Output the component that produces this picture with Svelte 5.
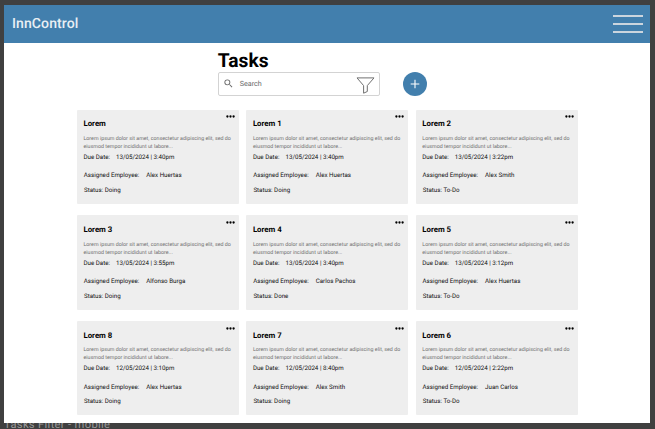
<script>
  const tasks = [
    ['Lorem', '13/05/2024 | 3:40pm', 'Alex Huertas', 'Doing'],
    ['Lorem 1', '13/05/2024 | 3:40pm', 'Alex Huertas', 'Doing'],
    ['Lorem 2', '13/05/2024 | 3:22pm', 'Alex Smith', 'To-Do'],
    ['Lorem 3', '13/05/2024 | 3:55pm', 'Alfonso Burga', 'Doing'],
    ['Lorem 4', '13/05/2024 | 3:40pm', 'Carlos Pachos', 'Done'],
    ['Lorem 5', '13/05/2024 | 3:12pm', 'Alex Huertas', 'To-Do'],
    ['Lorem 8', '12/05/2024 | 3:10pm', 'Alex Huertas', 'Doing'],
    ['Lorem 7', '12/05/2024 | 8:40pm', 'Alex Smith', 'Doing'],
    ['Lorem 6', '12/05/2024 | 2:22pm', 'Juan Carlos', 'To-Do']
  ].map(([title, due, employee, status]) => ({ title, due, employee, status }));
</script>

<div class="canvas">
  <main class="frame">
    <header>
      <span class="brand">InnControl</span>
      <button class="menu" aria-label="Menu"><i></i><i></i><i></i></button>
    </header>

    <section class="top">
      <h1>Tasks</h1>
      <div class="tools">
        <div class="search">
          <svg class="lens" viewBox="0 0 24 24"><path d="M15.5 14h-.79l-.28-.27A6.47 6.47 0 0 0 16 9.5 6.5 6.5 0 1 0 9.5 16c1.61 0 3.09-.59 4.23-1.57l.27.28v.79l5 4.99L20.49 19l-4.99-5zm-6 0C7.01 14 5 11.99 5 9.5S7.01 5 9.5 5 14 7.01 14 9.5 11.99 14 9.5 14z" /></svg>
          <span>Search</span>
          <svg class="funnel" viewBox="0 0 19 17"><path d="M1 .9H18L11.3 8.6V14.5L7.6 16.2V8.6Z" /></svg>
        </div>
        <button class="add" aria-label="Add task">
          <svg viewBox="0 0 24 24"><path d="M12 7.7v8.6M7.7 12h8.6" /></svg>
        </button>
      </div>
    </section>

    <section class="grid">
      {#each tasks as task}
        <article>
          <svg class="dots" viewBox="0 0 9 3"><circle cx="1.4" cy="1.5" r="1.15" /><circle cx="4.5" cy="1.5" r="1.15" /><circle cx="7.6" cy="1.5" r="1.15" /></svg>
          <h2>{task.title}</h2>
          <p class="desc">Lorem ipsum dolor sit amet, consectetur adipiscing elit, sed do<br />eiusmod tempor incididunt ut labore...</p>
          <p class="row due"><span>Due Date:</span><span>{task.due}</span></p>
          <p class="row who"><span>Assigned Employee:</span><span>{task.employee}</span></p>
          <p class="row status">Status: {task.status}</p>
        </article>
      {/each}
    </section>
  </main>
  <div class="label">Tasks Filter - mobile</div>
</div>

<style>
  :global(body) { background: #404040; overflow: hidden; }
  .canvas {
    box-sizing: border-box;
    width: 655px;
    height: 429px;
    padding: 5px 4px 0 4px;
    overflow: hidden;
    background: #404040;
    font-family: Roboto, sans-serif;
    text-rendering: geometricPrecision;
    color: #000;
  }
  .frame {
    position: relative;
    z-index: 1;
    box-sizing: border-box;
    width: 646px;
    height: 418px;
    padding-left: 0.5px;
    background: #fff;
  }
  button { border: 0; padding: 0; background: none; }
  h1, h2, p { margin: 0; white-space: nowrap; }
  header {
    display: flex;
    justify-content: space-between;
    box-sizing: border-box;
    height: 38px;
    margin-left: -0.5px;
    padding: 0 7.5px 0 8px;
    background: #427fad;
  }
  .brand {
    line-height: 39px;
    font-size: 14px;
    font-weight: 500;
    letter-spacing: 0.1px;
    color: #e9eff4;
  }
  .menu {
    display: flex;
    flex-direction: column;
    gap: 6.4px;
    width: 30px;
    padding-top: 10.2px;
  }
  .menu i { height: 1.6px; background: #cbd5de; }
  .top { padding: 6px 0 0 213.3px; }
  h1 { font-size: 19.2px; line-height: 23px; font-weight: 700; }
  .tools { display: flex; align-items: center; gap: 23px; height: 24px; }
  .search {
    display: flex;
    align-items: center;
    box-sizing: border-box;
    width: 162.5px;
    height: 24px;
    padding: 0 4px 0 4.5px;
    border: 1px solid #d3d3d3;
    border-radius: 2px;
    font-size: 7.2px;
    color: #666;
  }
  .search span { margin: -1px auto 0 5.4px; }
  .lens { width: 11px; height: 11px; margin-top: -2px; fill: #666; }
  .funnel { width: 19px; height: 17px; margin-top: 3px; fill: none; stroke: #707070; stroke-width: 1; }
  .add { width: 24px; height: 24px; border-radius: 50%; background: #427fad; }
  .add svg { display: block; fill: none; stroke: #fff; stroke-width: 1.1; }
  .grid {
    display: grid;
    grid-template-columns: repeat(3, 162px);
    grid-auto-rows: 94.4px;
    gap: 11.4px 7.4px;
    padding: 13.5px 0 0 72.5px;
  }
  article {
    position: relative;
    box-sizing: border-box;
    padding: 8.6px 0 0 6.5px;
    border-radius: 1px;
    background: #eee;
  }
  .dots { position: absolute; top: 5.5px; right: 4px; width: 9px; height: 3px; }
  h2 { font-size: 7.8px; line-height: 11px; font-weight: 700; }
  .desc {
    margin-top: 5.8px;
    font-size: 5.3px;
    line-height: 8px;
    color: #707070;
  }
  .row { display: flex; font-size: 6.2px; line-height: 8px; color: #111; }
  .due { margin-top: 1.9px; gap: 6px; }
  .who { margin: 10.5px 0 0 0.3px; gap: 7px; }
  .status { margin: 6.5px 0 0 0.5px; }
  .label {
    margin-top: -5.5px;
    font-size: 11.2px;
    line-height: 13px;
    letter-spacing: 0.32px;
    color: #999;
  }
</style>
